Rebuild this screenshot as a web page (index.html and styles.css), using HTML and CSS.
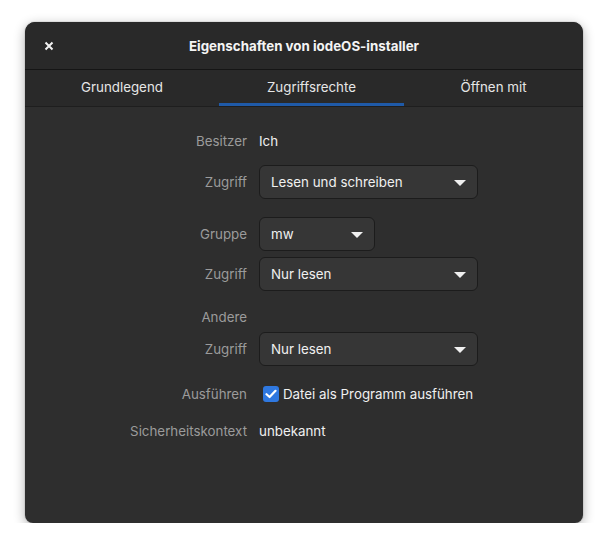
FILE: index.html
```html
<!DOCTYPE html>
<html lang="de">
<head>
<meta charset="utf-8">
<title>Eigenschaften von iodeOS-installer</title>
<link rel="stylesheet" href="styles.css">
</head>
<body>
<div class="window">
  <header class="headerbar">
    <button class="close" aria-label="Schließen">
      <svg width="10" height="10" viewBox="0 0 10 10"><path d="M1.5 1.5 L8.5 8.5 M8.5 1.5 L1.5 8.5" stroke="#f2f2f2" stroke-width="2" stroke-linecap="butt"/></svg>
    </button>
    <div class="title">Eigenschaften von iodeOS-installer</div>
  </header>
  <nav class="tabs">
    <div class="tab">Grundlegend</div>
    <div class="tab active">Zugriffsrechte</div>
    <div class="tab">Öffnen mit</div>
  </nav>
  <main class="content">
    <div class="row r-owner">
      <div class="label">Besitzer</div>
      <div class="value">Ich</div>
    </div>
    <div class="row r-a1">
      <div class="label">Zugriff</div>
      <div class="dropdown wide"><span>Lesen und schreiben</span><i class="arrow"></i></div>
    </div>
    <div class="row r-group">
      <div class="label">Gruppe</div>
      <div class="dropdown narrow"><span>mw</span><i class="arrow"></i></div>
    </div>
    <div class="row r-a2">
      <div class="label">Zugriff</div>
      <div class="dropdown wide"><span>Nur lesen</span><i class="arrow"></i></div>
    </div>
    <div class="row r-other">
      <div class="label">Andere</div>
      <div class="value"></div>
    </div>
    <div class="row r-a3">
      <div class="label">Zugriff</div>
      <div class="dropdown wide"><span>Nur lesen</span><i class="arrow"></i></div>
    </div>
    <div class="row r-exec">
      <div class="label">Ausführen</div>
      <label class="check">
        <span class="box"><svg width="12" height="10" viewBox="0 0 12 10"><path d="M1.5 5.2 L4.6 8 L10.5 1.8" fill="none" stroke="#fff" stroke-width="2.2" stroke-linecap="round" stroke-linejoin="round"/></svg></span>
        <span class="value">Datei als Programm ausführen</span>
      </label>
    </div>
    <div class="row r-sec">
      <div class="label">Sicherheitskontext</div>
      <div class="value">unbekannt</div>
    </div>
  </main>
</div>
</body>
</html>
```

FILE: styles.css
```css
html, body {
  margin: 0;
  padding: 0;
  background: #ffffff;
}
body {
  font-family: Inter, "Noto Sans", "DejaVu Sans", sans-serif;
  font-size: 13.33px;
  color: #eeeeee;
}
.window {
  margin: 22px 0 0 25px;
  width: 558px;
  height: 501px;
  background: #2e2e2e;
  border-radius: 10px 10px 8px 8px;
  box-shadow: 0 3px 12px rgba(0, 0, 0, 0.32), 0 0 0 1px rgba(0, 0, 0, 0.06);
  overflow: hidden;
  display: flex;
  flex-direction: column;
}
.headerbar {
  height: 47px;
  background: #292929;
  border-bottom: 1px solid #151515;
  display: flex;
  align-items: center;
  position: relative;
}
.close {
  width: 26px;
  height: 26px;
  margin-left: 11px;
  border: 0;
  background: transparent;
  padding: 0;
  display: flex;
  align-items: center;
  justify-content: center;
}
.title {
  position: absolute;
  left: 0;
  right: 0;
  text-align: center;
  font-weight: 700;
  color: #f4f4f4;
  pointer-events: none;
}
.tabs {
  height: 36px;
  background: #292929;
  border-bottom: 1px solid #1e1e1e;
  display: grid;
  grid-template-columns: 194px 185px 179px;
}
.tab {
  display: flex;
  align-items: center;
  justify-content: center;
  color: #e6e6e6;
  box-sizing: border-box;
  padding-bottom: 2px;
}
.tab.active {
  border-bottom: 3px solid #1f5aa8;
  padding-bottom: 0;
}
.content {
  flex: 1;
  padding-top: 24px;
  display: flex;
  flex-direction: column;
}
.row {
  display: grid;
  grid-template-columns: 222px auto;
  column-gap: 12px;
  align-items: center;
  min-height: 20px;
}
.label {
  text-align: right;
  color: #9b9b9b;
}
.value {
  color: #f0f0f0;
}
.r-a1 { margin-top: 14px; }
.r-group { margin-top: 18px; }
.r-a2 { margin-top: 6px; }
.r-other { margin-top: 16px; }
.r-a3 { margin-top: 5px; }
.r-exec { margin-top: 18px; }
.r-sec { margin-top: 17px; }
.dropdown {
  box-sizing: border-box;
  height: 34px;
  background: #363636;
  border: 1px solid #1c1c1c;
  border-radius: 6px;
  display: flex;
  align-items: center;
  justify-content: space-between;
  padding: 0 11px 0 11px;
  color: #f0f0f0;
}
.dropdown.wide { width: 219px; }
.dropdown.narrow { width: 116px; }
.arrow {
  width: 0;
  height: 0;
  border-left: 6px solid transparent;
  border-right: 6px solid transparent;
  border-top: 6px solid #f0f0f0;
  margin-top: 1px;
}
.check {
  display: flex;
  align-items: center;
  gap: 4px;
  padding-left: 4px;
}
.box {
  width: 16px;
  height: 16px;
  border-radius: 3px;
  background: #2f78e0;
  display: flex;
  align-items: center;
  justify-content: center;
}
```
